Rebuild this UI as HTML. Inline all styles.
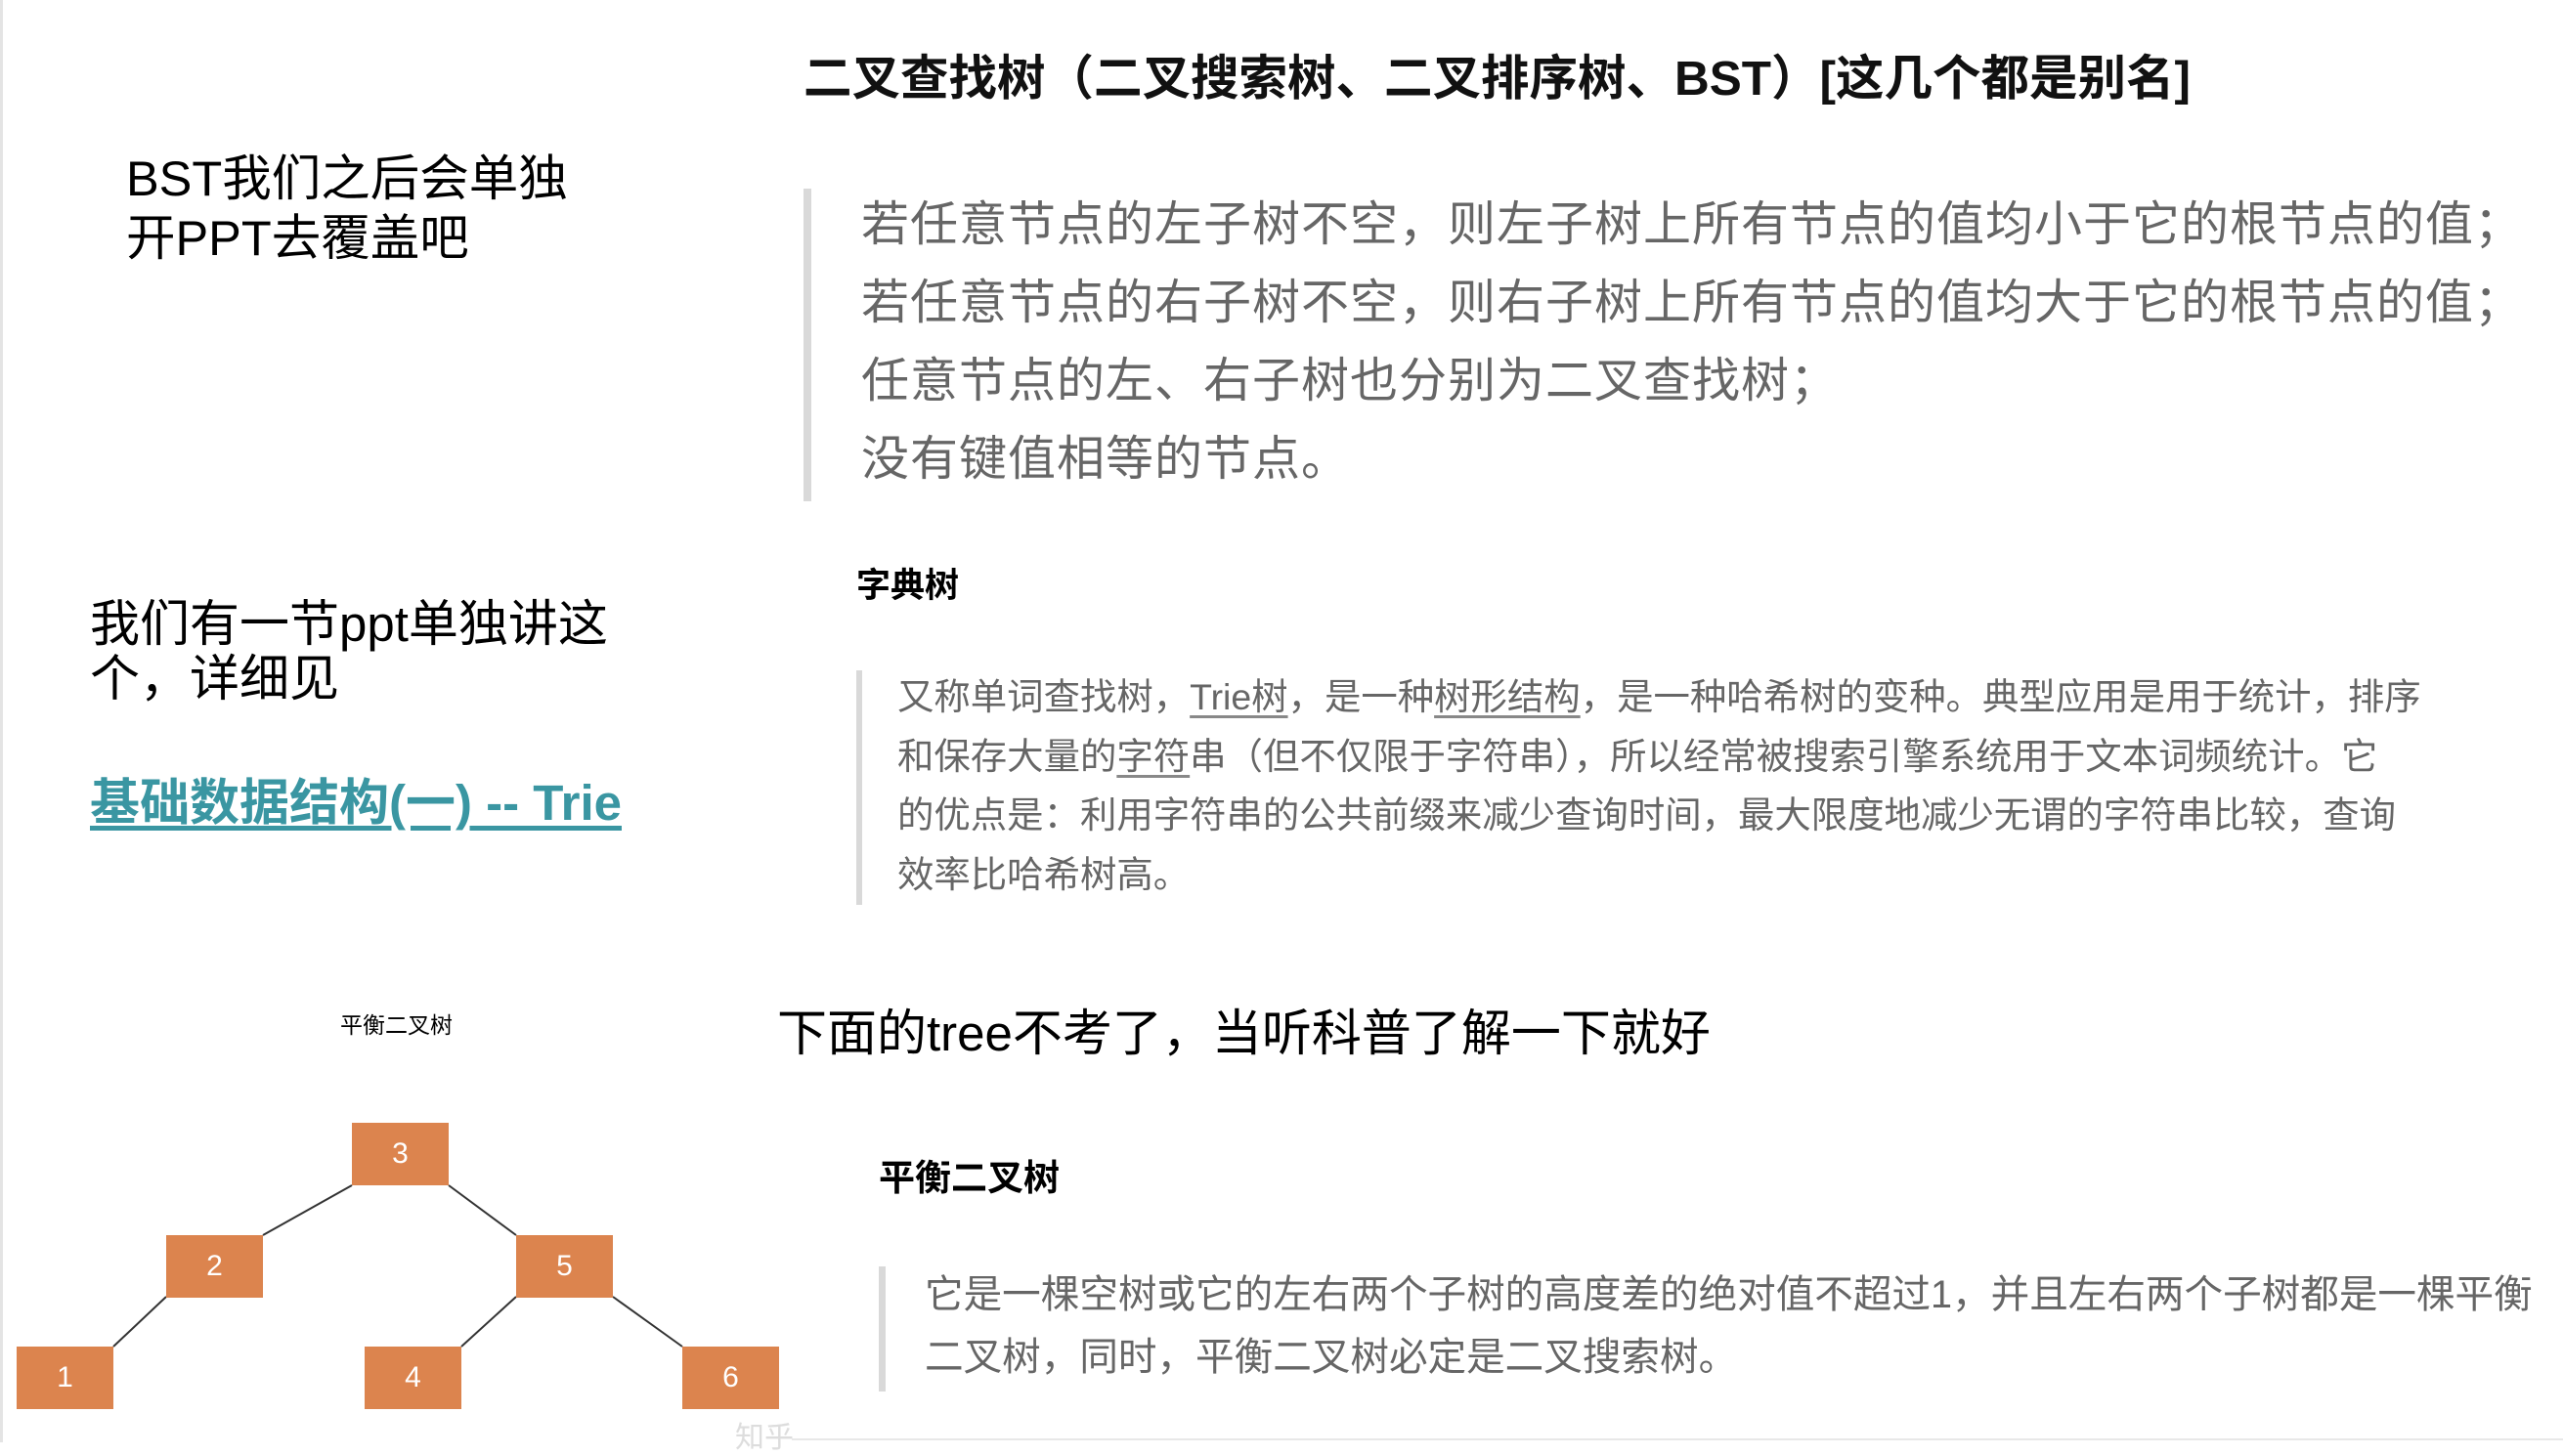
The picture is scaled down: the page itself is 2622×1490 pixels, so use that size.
<!DOCTYPE html>
<html><head><meta charset="utf-8"><style>
html,body{margin:0;padding:0;background:#fff;}
body{width:2622px;height:1476px;position:relative;overflow:hidden;font-family:"Liberation Sans","Noto Sans CJK SC",sans-serif;color:#000;}
.a{position:absolute;white-space:nowrap;}
.bar{position:absolute;background:#d9d9d9;}
.n{position:absolute;width:99px;height:64px;background:#dc844e;color:#fff;font-size:30px;line-height:64px;text-align:center;}
u{text-decoration:underline;text-decoration-color:#888;text-underline-offset:6px;}
</style></head><body>
<div style="position:absolute;left:0;top:0;width:3px;height:1476px;background:#e4e4e4"></div>

<div class="a" style="left:822px;top:52px;font-size:49.5px;font-weight:bold;line-height:58px;color:#111">二叉查找树（二叉搜索树、二叉排序树、BST）[这几个都是别名]</div>

<div class="a" style="left:129px;top:152px;font-size:50.5px;line-height:61px">BST我们之后会单独<br>开PPT去覆盖吧</div>

<div class="bar" style="left:822px;top:193px;width:8px;height:320px"></div>
<div class="a" style="left:881px;top:190px;font-size:49px;line-height:80px;color:#666;letter-spacing:1px">若任意节点的左子树不空，则左子树上所有节点的值均小于它的根节点的值；<br>若任意节点的右子树不空，则右子树上所有节点的值均大于它的根节点的值；<br>任意节点的左、右子树也分别为二叉查找树；<br>没有键值相等的节点。</div>

<div class="a" style="left:876px;top:579px;font-size:35px;font-weight:bold;line-height:42px">字典树</div>

<div class="bar" style="left:876px;top:686px;width:6px;height:240px"></div>
<div class="a" style="left:918px;top:683px;font-size:37.4px;line-height:60.5px;color:#666">又称单词查找树，<u>Trie树</u>，是一种<u>树形结构</u>，是一种哈希树的变种。典型应用是用于统计，排序<br>和保存大量的<u>字符</u>串（但不仅限于字符串），所以经常被搜索引擎系统用于文本词频统计。它<br>的优点是：利用字符串的公共前缀来减少查询时间，最大限度地减少无谓的字符串比较，查询<br>效率比哈希树高。</div>

<div class="a" style="left:92px;top:611px;font-size:51px;line-height:56px">我们有一节ppt单独讲这<br>个，详细见</div>
<div class="a" style="left:92px;top:792px;font-size:51px;line-height:60px;font-weight:bold;color:#3a96a2;text-decoration:underline;text-underline-offset:6px">基础数据结构(一) -- Trie</div>

<div class="a" style="left:348px;top:1035px;font-size:23px;line-height:28px">平衡二叉树</div>
<svg style="position:absolute;left:0;top:0" width="900" height="1476">
<g stroke="#333" stroke-width="2">
<line x1="360" y1="1213" x2="269" y2="1264"/>
<line x1="459" y1="1213" x2="528" y2="1264"/>
<line x1="170" y1="1327" x2="116" y2="1378"/>
<line x1="528" y1="1327" x2="472" y2="1378"/>
<line x1="627" y1="1327" x2="698" y2="1378"/>
</g></svg>
<div class="n" style="left:360px;top:1149px">3</div>
<div class="n" style="left:170px;top:1264px">2</div>
<div class="n" style="left:528px;top:1264px">5</div>
<div class="n" style="left:17px;top:1378px">1</div>
<div class="n" style="left:373px;top:1378px">4</div>
<div class="n" style="left:698px;top:1378px">6</div>
<div class="a" style="left:752px;top:1446px;font-size:30px;color:#ddd">知乎</div>
<div style="position:absolute;left:810px;top:1472px;width:1812px;height:2px;background:#e8e8e8"></div>

<div class="a" style="left:795px;top:1028px;font-size:51px;line-height:60px">下面的tree不考了，当听科普了解一下就好</div>

<div class="a" style="left:899px;top:1185px;font-size:37px;font-weight:bold;line-height:42px">平衡二叉树</div>
<div class="bar" style="left:899px;top:1296px;width:7px;height:128px"></div>
<div class="a" style="left:946px;top:1293px;font-size:39.6px;line-height:64px;color:#666">它是一棵空树或它的左右两个子树的高度差的绝对值不超过1，并且左右两个子树都是一棵平衡<br>二叉树，同时，平衡二叉树必定是二叉搜索树。</div>
</body></html>
